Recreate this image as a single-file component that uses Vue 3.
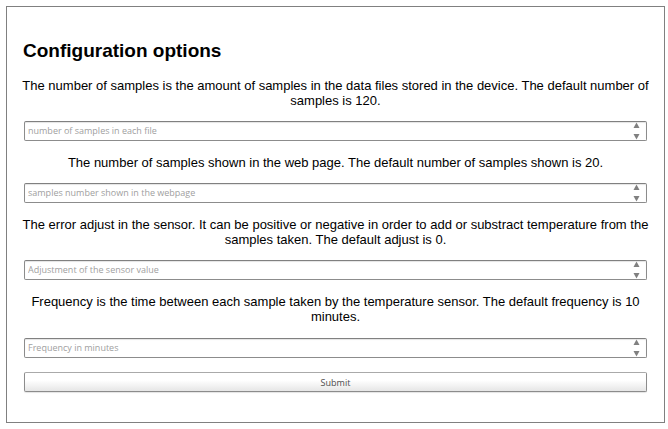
<script setup>
import { reactive } from 'vue'

const fields = [
  {
    id: 'samples',
    label: 'The number of samples is the amount of samples in the data files stored in the device. The default number of samples is 120.',
    placeholder: 'number of samples in each file',
  },
  {
    id: 'shown',
    label: 'The number of samples shown in the web page. The default number of samples shown is 20.',
    placeholder: 'samples number shown in the webpage',
  },
  {
    id: 'adjust',
    label: 'The error adjust in the sensor. It can be positive or negative in order to add or substract temperature from the samples taken. The default adjust is 0.',
    placeholder: 'Adjustment of the sensor value',
  },
  {
    id: 'frequency',
    label: 'Frequency is the time between each sample taken by the temperature sensor. The default frequency is 10 minutes.',
    placeholder: 'Frequency in minutes',
  },
]

const values = reactive({ samples: '', shown: '', adjust: '', frequency: '' })
</script>

<template>
  <main class="panel">
    <h1 class="title">Configuration options</h1>
    <form class="form" @submit.prevent>
      <div v-for="field in fields" :key="field.id" class="field">
        <label class="label" :for="field.id">{{ field.label }}</label>
        <div class="number-box">
          <input
            :id="field.id"
            v-model="values[field.id]"
            class="number"
            type="number"
            :placeholder="field.placeholder"
          />
          <svg class="arrows" width="7" height="18" viewBox="0 0 7 18" aria-hidden="true">
            <path d="M3.5 0.5 L6.5 6 H0.5 Z" />
            <path d="M3.5 17.5 L6.5 12 H0.5 Z" />
          </svg>
        </div>
      </div>
      <button class="submit" type="submit">Submit</button>
    </form>
  </main>
</template>

<style>
body {
  background: #fff;
}
</style>

<style scoped>
.panel {
  margin: 6px 3px 6px 6px;
  padding: 32px 16px 30px;
  border: 1px solid #808080;
  font-family: "Liberation Sans", Arial, sans-serif;
  color: #000;
}

.title {
  margin: 0 0 16px;
  font-size: 19px;
  line-height: 23px;
  font-weight: bold;
}

.form {
  display: flex;
  flex-direction: column;
  gap: 14px;
}

.field {
  display: flex;
  flex-direction: column;
  gap: 13px;
}

.field:last-of-type {
  gap: 14px;
}

.label {
  margin: 0 -4px;
  font-size: 13px;
  line-height: 15px;
  text-align: center;
}

.number-box {
  display: flex;
  align-items: center;
  box-sizing: border-box;
  height: 20px;
  margin: 0 1px;
  padding: 0 6px 0 3px;
  border: 1px solid #8c8c8c;
  border-top-color: #808080;
  border-radius: 2px;
  background: #fff;
  box-shadow: inset 0 1px 1px #e4e4e4;
}

.number {
  flex: 1;
  min-width: 0;
  height: 18px;
  padding: 0 0 1px;
  border: 0;
  outline: 0;
  background: transparent;
  font-family: "Open Sans", sans-serif;
  font-size: 9px;
  color: #333;
  appearance: textfield;
}

.number::-webkit-inner-spin-button,
.number::-webkit-outer-spin-button {
  appearance: none;
  margin: 0;
}

.number::placeholder {
  color: #a0a0a0;
  opacity: 1;
}

.arrows {
  flex: none;
  fill: #808080;
}

.submit {
  height: 20px;
  margin: 0 1px;
  padding: 0;
  border: 1px solid #8c8c8c;
  border-top-color: #aaa;
  border-radius: 2px;
  background: linear-gradient(#fff 40%, #e6e6e6);
  box-shadow: 0 1px 1px #e4e4e4;
  font-family: "Open Sans", sans-serif;
  font-size: 9px;
  color: #4c4c4c;
}
</style>
